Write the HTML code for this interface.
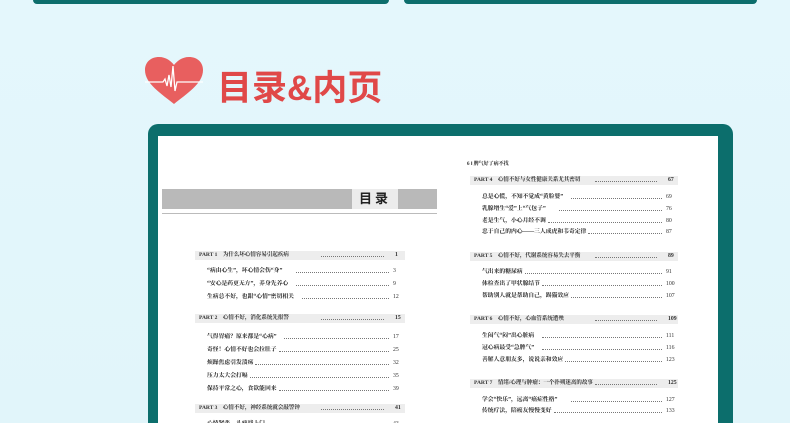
<!DOCTYPE html>
<html style="width:790px;height:423px;overflow:hidden"><head><meta charset="utf-8"><style>
*{margin:0;padding:0;box-sizing:border-box}
body{width:790px;height:423px;overflow:hidden;background:linear-gradient(#e4f7fc,#e1f5fa);position:relative;font-family:"Liberation Serif","Noto Serif CJK SC",serif}
.a{position:absolute}
.bar{background:#0c6e6c}
.t{position:absolute;font-size:5.8px;color:#222;white-space:nowrap;line-height:7px;font-weight:bold}
.p{position:absolute;background:#ededed;height:9px;font-size:5.5px;font-weight:bold;color:#333;line-height:9px;padding-left:4px;white-space:nowrap;overflow:hidden}
.d{position:absolute;border-top:1px dotted #777;height:0}
.n{position:absolute;font-size:5.8px;color:#333;line-height:7px}
</style></head><body>
<div class="a bar" style="left:33px;top:-6px;width:356px;height:10px;border-radius:4px"></div>
<div class="a bar" style="left:404px;top:-6px;width:353px;height:10px;border-radius:4px"></div>
<svg class="a" style="left:144px;top:56px" width="60" height="49" viewBox="0 0 60 49">
<path d="M30 48 C18 38 1 28 1 14 C1 6 7 1 15 1 C22 1 27 5 30 9 C33 5 38 1 45 1 C53 1 59 6 59 14 C59 28 42 38 30 48Z" fill="#e85f5f"/>
<path d="M1 26 H19 L21 23 L23 30 L25 19 L27 31 L29 10 L31 35 L33 26 H59" stroke="#fff" stroke-width="1.3" fill="none"/>
</svg>
<div class="a" style="left:217px;top:60px;font-family:'Liberation Sans','Noto Sans CJK SC',sans-serif;font-size:35px;font-weight:bold;color:#e04848">目录&amp;内页</div>
<div class="a bar" style="left:148px;top:124px;width:585px;height:299px;border-radius:10px 10px 0 0"></div>
<div class="a" style="left:158px;top:136px;width:560px;height:287px;background:#fff"></div>
<div class="a" style="left:162px;top:189px;width:275px;height:20px;background:#b9b9b9"></div>
<div class="a" style="left:352px;top:189px;width:46px;height:20px;background:#ececec;font-family:'Liberation Sans','Noto Sans CJK SC',sans-serif;font-weight:bold;font-size:13px;line-height:20px;text-align:center;color:#222;letter-spacing:3px">目录</div>
<div class="a" style="left:162px;top:213px;width:275px;height:1px;background:#bbb"></div>
<div id="L"></div>
<div id="R"></div>
<div class="t" style="left:467px;top:161px;font-size:5px">6 ‖ 脾气好了病不找</div>
<script>
function sec(x,w,py,title,num,items){let h='';
h+=`<div class="p" style="left:${x}px;top:${py}px;width:${w}px">${title}</div><div class="n" style="left:${x+w-10}px;top:${py+1}px;font-weight:bold">${num}</div><div class="d" style="left:${x+w*0.6}px;top:${py+5}px;width:${w*0.3}px"></div>`;
items.forEach(([t,y,n])=>{h+=`<div class="t" style="left:${x+12}px;top:${y-3}px">${t}</div><div class="d" style="left:${x+14+t.length*5.8}px;top:${y+1}px;width:${w-30-t.length*5.8}px"></div><div class="n" style="left:${x+w-12}px;top:${y-3}px">${n}</div>`});return h;}
let L='';
L+=sec(195,210,251,'PART 1　为什么坏心情容易引起疾病','1',[['“病由心生”，坏心情会伤“身”',271,'3'],['“安心是药更无方”，养身先养心',284,'9'],['生病总不好，也跟“心情”密切相关',297,'12']]);
L+=sec(195,210,314,'PART 2　心情不好，消化系统先报警','15',[['气得胃痛？原来都是“心病”',337,'17'],['奇怪！心情不好也会拉肚子',350,'25'],['烦躁焦虑引发溃疡',363,'32'],['压力太大会打嗝',376,'35'],['保持平常之心，食欲能回来',389,'39']]);
L+=sec(195,210,404,'PART 3　心情不好，神经系统就会敲警钟','41',[['心情紧张，头痛找上门',424,'43']]);
document.getElementById('L').innerHTML=L;
let R='';
R+=sec(470,208,176,'PART 4　心情不好与女性健康关系尤其密切','67',[['总是心慌，不知不觉成“黄脸婆”',197,'69'],['乳腺增生“爱”上“气包子”',209,'76'],['老是生气，小心月经不调',221,'80'],['忠于自己的内心——三人成虎和韦奇定律',232,'87']]);
R+=sec(470,208,252,'PART 5　心情不好，代谢系统容易失去平衡','89',[['气出来的糖尿病',272,'91'],['体检查出了甲状腺结节',284,'100'],['帮助别人就是帮助自己，踢猫效应',296,'107']]);
R+=sec(470,208,315,'PART 6　心情不好，心血管系统遭殃','109',[['生闷气“闷”出心脏病',336,'111'],['冠心病最受“急脾气”',348,'116'],['善解人意朋友多，说说亲和效应',360,'123']]);
R+=sec(470,208,379,'PART 7　情绪/心理与肿瘤：一个扑朔迷离的故事','125',[['学会“快乐”，远离“癌症性格”',400,'127'],['传统疗法，陪癌友慢慢变好',411,'133']]);
document.getElementById('R').innerHTML=R;
</script>
</body></html>
